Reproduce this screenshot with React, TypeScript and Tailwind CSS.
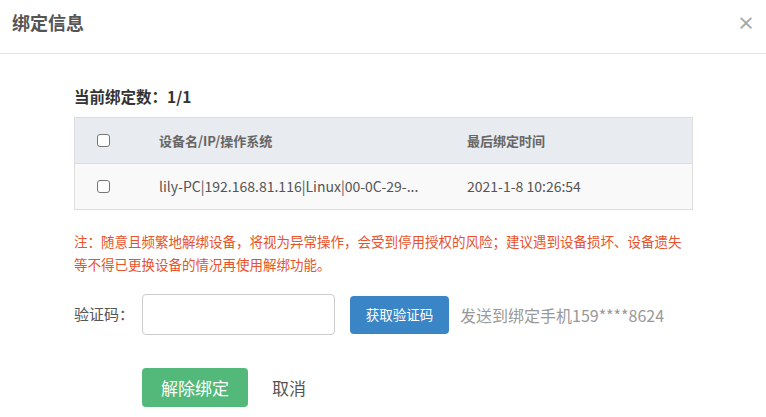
import React, { useState } from 'react';

const FONT = '"Microsoft YaHei", "Noto Sans CJK SC", "Noto Sans", sans-serif';

const Checkbox = () => (
  <span className="inline-block w-[13px] h-[13px] rounded-[3px] border border-[#767676] bg-white" />
);

const App: React.FC = () => {
  const [code, setCode] = useState('');

  return (
    <div className="w-[766px] h-[417px] bg-white overflow-hidden" style={{ fontFamily: FONT }}>
      {/* Header */}
      <div className="h-[54px] border-b border-[#e5e5e5] flex items-center justify-between pl-[12px] pr-[11px]">
        <h3 className="text-[18px] font-bold text-[#555] leading-none -mt-[10px]">绑定信息</h3>
        <span className="text-[18px] text-[#aaa] font-bold leading-none -mt-[10px]">×</span>
      </div>

      <div className="pl-[74px] pr-[74px]">
        <p className="mt-[32px] text-[15.5px] font-bold text-[#333] leading-[20px]">当前绑定数：1/1</p>

        {/* Device table */}
        <div className="mt-[11px] w-[619px] border border-[#ddd]">
          <div className="h-[46px] bg-[#e8ebef] border-b border-[#ddd] flex items-center text-[13px] font-bold text-[#666]">
            <div className="w-[84px] pl-[22px] flex items-center"><Checkbox /></div>
            <div className="w-[308px]">设备名/IP/操作系统</div>
            <div>最后绑定时间</div>
          </div>
          <div className="h-[45px] bg-[#f9f9f9] flex items-center text-[14px] text-[#555]">
            <div className="w-[84px] pl-[22px] flex items-center"><Checkbox /></div>
            <div className="w-[308px]">lily-PC|192.168.81.116|Linux|00-0C-29-...</div>
            <div>2021-1-8 10:26:54</div>
          </div>
        </div>

        {/* Warning */}
        <p className="mt-[20px] text-[13.5px] leading-[23px] text-[#e8522c] w-[620px]">
          注：随意且频繁地解绑设备，将视为异常操作，会受到停用授权的风险；建议遇到设备损坏、设备遗失等不得已更换设备的情况再使用解绑功能。
        </p>

        {/* Verify code */}
        <div className="mt-[18px] flex items-center">
          <label className="w-[68px] text-[15px] text-[#555]">验证码：</label>
          <input
            value={code}
            onChange={e => setCode(e.target.value)}
            className="w-[193px] h-[41px] border border-[#ccc] rounded-[4px] px-2 outline-none"
          />
          <button className="ml-[15px] w-[99px] h-[38px] bg-[#3a85c6] rounded-[4px] text-white text-[13.5px]">
            获取验证码
          </button>
          <span className="ml-[11px] text-[16px] text-[#999]">发送到绑定手机159****8624</span>
        </div>

        {/* Actions */}
        <div className="mt-[33px] pl-[68px] flex items-center">
          <button className="w-[106px] h-[39px] bg-[#52b97a] rounded-[4px] text-white text-[17px]">解除绑定</button>
          <button className="ml-[24px] text-[17px] text-[#555]">取消</button>
        </div>
      </div>
    </div>
  );
};

export default App;
